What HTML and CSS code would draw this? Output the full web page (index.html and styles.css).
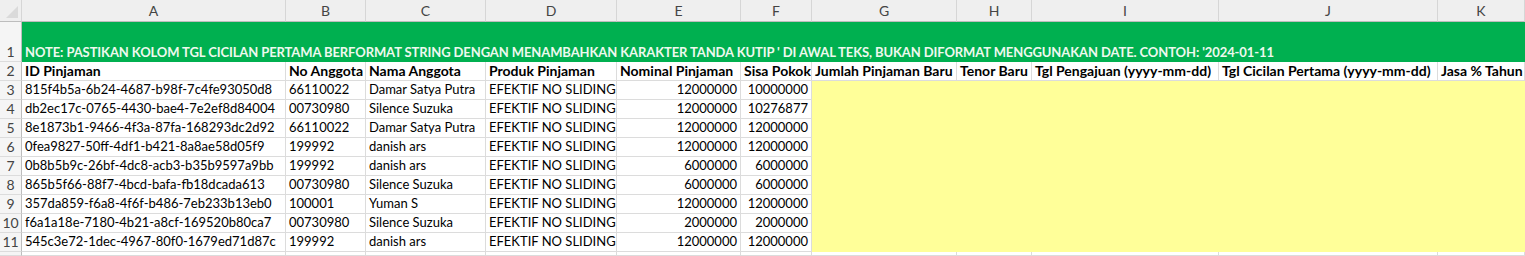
FILE: index.html
```html
<!DOCTYPE html>
<html lang="id">
<head>
<meta charset="utf-8">
<title>Sheet</title>
<link rel="stylesheet" href="styles.css">
</head>
<body>
<div class="sheet">
  <div class="corner"><span class="tri"></span></div>
  <div class="ch">A</div><div class="ch">B</div><div class="ch">C</div><div class="ch">D</div><div class="ch">E</div><div class="ch">F</div><div class="ch">G</div><div class="ch">H</div><div class="ch">I</div><div class="ch">J</div><div class="ch">K</div>

  <div class="rh">1</div>
  <div class="note">NOTE: PASTIKAN KOLOM TGL CICILAN PERTAMA BERFORMAT STRING DENGAN MENAMBAHKAN KARAKTER TANDA KUTIP ' DI AWAL TEKS, BUKAN DIFORMAT MENGGUNAKAN DATE. CONTOH: '2024-01-11</div>

  <div class="rh">2</div>
  <div class="c b">ID Pinjaman</div><div class="c b">No Anggota</div><div class="c b">Nama Anggota</div><div class="c b">Produk Pinjaman</div><div class="c b">Nominal Pinjaman</div><div class="c b">Sisa Pokok</div><div class="c b">Jumlah Pinjaman Baru</div><div class="c b">Tenor Baru</div><div class="c b">Tgl Pengajuan (yyyy-mm-dd)</div><div class="c b">Tgl Cicilan Pertama (yyyy-mm-dd)</div><div class="c b">Jasa % Tahun</div>

  <div class="rh">3</div>
  <div class="c">815f4b5a-6b24-4687-b98f-7c4fe93050d8</div><div class="c">66110022</div><div class="c">Damar Satya Putra</div><div class="c">EFEKTIF NO SLIDING</div><div class="c n">12000000</div><div class="c n">10000000</div><div class="y"></div>

  <div class="rh">4</div>
  <div class="c">db2ec17c-0765-4430-bae4-7e2ef8d84004</div><div class="c">00730980</div><div class="c">Silence Suzuka</div><div class="c">EFEKTIF NO SLIDING</div><div class="c n">12000000</div><div class="c n">10276877</div><div class="y"></div>

  <div class="rh">5</div>
  <div class="c">8e1873b1-9466-4f3a-87fa-168293dc2d92</div><div class="c">66110022</div><div class="c">Damar Satya Putra</div><div class="c">EFEKTIF NO SLIDING</div><div class="c n">12000000</div><div class="c n">12000000</div><div class="y"></div>

  <div class="rh">6</div>
  <div class="c">0fea9827-50ff-4df1-b421-8a8ae58d05f9</div><div class="c">199992</div><div class="c">danish ars</div><div class="c">EFEKTIF NO SLIDING</div><div class="c n">12000000</div><div class="c n">12000000</div><div class="y"></div>

  <div class="rh">7</div>
  <div class="c">0b8b5b9c-26bf-4dc8-acb3-b35b9597a9bb</div><div class="c">199992</div><div class="c">danish ars</div><div class="c">EFEKTIF NO SLIDING</div><div class="c n">6000000</div><div class="c n">6000000</div><div class="y"></div>

  <div class="rh">8</div>
  <div class="c">865b5f66-88f7-4bcd-bafa-fb18dcada613</div><div class="c">00730980</div><div class="c">Silence Suzuka</div><div class="c">EFEKTIF NO SLIDING</div><div class="c n">6000000</div><div class="c n">6000000</div><div class="y"></div>

  <div class="rh">9</div>
  <div class="c">357da859-f6a8-4f6f-b486-7eb233b13eb0</div><div class="c">100001</div><div class="c">Yuman S</div><div class="c">EFEKTIF NO SLIDING</div><div class="c n">12000000</div><div class="c n">12000000</div><div class="y"></div>

  <div class="rh">10</div>
  <div class="c">f6a1a18e-7180-4b21-a8cf-169520b80ca7</div><div class="c">00730980</div><div class="c">Silence Suzuka</div><div class="c">EFEKTIF NO SLIDING</div><div class="c n">2000000</div><div class="c n">2000000</div><div class="y"></div>

  <div class="rh">11</div>
  <div class="c">545c3e72-1dec-4967-80f0-1679ed71d87c</div><div class="c">199992</div><div class="c">danish ars</div><div class="c">EFEKTIF NO SLIDING</div><div class="c n">12000000</div><div class="c n">12000000</div><div class="y"></div>

  <div class="rh"></div>
  <div class="c"></div><div class="c"></div><div class="c"></div><div class="c"></div><div class="c"></div><div class="c"></div><div class="c"></div><div class="c"></div><div class="c"></div><div class="c"></div><div class="c"></div>
</div>
</body>
</html>
```

FILE: styles.css
```css
* { box-sizing: border-box; }
html, body { margin: 0; padding: 0; background: #fff; overflow: hidden; }
body { font-family: Lato, "Liberation Sans", sans-serif; font-size: 13px; color: #000; }

.sheet {
  display: grid;
  grid-template-columns: 22px 264px 80px 120px 131px 124px 71px 145px 75px 187px 219px 1fr;
  grid-template-rows: 22px 40px repeat(10, 19px) 4px;
  width: 1525px;
  height: 256px;
  overflow: hidden;
}

.corner {
  background: #efefef;
  border-right: 1px solid #d6d6d6;
  border-bottom: 1px solid #bdbdbd;
  position: relative;
}
.tri {
  position: absolute;
  right: 3px;
  bottom: 3px;
  width: 0;
  height: 0;
  border-left: 12px solid transparent;
  border-bottom: 12px solid #dadada;
}

.ch {
  background: #efefef;
  color: #444;
  border-right: 1px solid #d6d6d6;
  border-bottom: 1px solid #bdbdbd;
  display: flex;
  align-items: center;
  justify-content: center;
  font-size: 14px;
}

.rh {
  background: #f5f5f5;
  color: #444;
  border-right: 1px solid #bdbdbd;
  border-bottom: 1px solid #dcdcdc;
  display: flex;
  align-items: flex-end;
  justify-content: center;
  padding-bottom: 1px;
  line-height: 17px;
  font-size: 14px;
}

.note {
  grid-column: 2 / -1;
  background: #00b050;
  color: #eef9ee;
  font-weight: 700;
  display: flex;
  align-items: flex-end;
  padding: 0 0 1px 3px;
  line-height: 17px;
  white-space: nowrap;
  letter-spacing: -0.1px;
}

.c {
  border-right: 1px solid #dcdcdc;
  border-bottom: 1px solid #dcdcdc;
  display: flex;
  align-items: flex-end;
  padding: 0 3px 1px 3px;
  line-height: 17px;
  white-space: nowrap;
  overflow: hidden;
}
.b { font-weight: 700; font-size: 14px; }
.n { justify-content: flex-end; }

.y {
  grid-column: 8 / -1;
  background: #ffff99;
}
```
